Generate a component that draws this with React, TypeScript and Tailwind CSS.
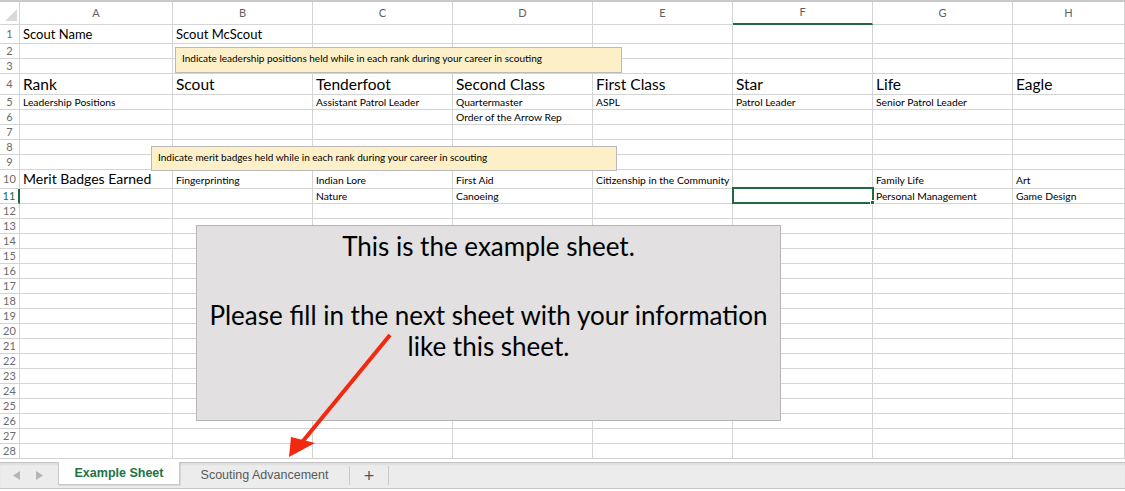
import React from "react";

type Row = {
  h: string;
  size?: string;
  cells: string[];
};

const cols = ["A", "B", "C", "D", "E", "F", "G", "H"];

const rows: Row[] = [
  { h: "h-[19px]", size: "text-[13px]", cells: ["Scout Name", "Scout McScout"] },
  { h: "h-[15px]", cells: [] },
  { h: "h-[15px]", cells: [] },
  {
    h: "h-[21px]",
    size: "text-[15.5px]",
    cells: ["Rank", "Scout", "Tenderfoot", "Second Class", "First Class", "Star", "Life", "Eagle"],
  },
  {
    h: "h-[15px]",
    size: "text-[10.3px] pb-px",
    cells: [
      "Leadership Positions",
      "",
      "Assistant Patrol Leader",
      "Quartermaster",
      "ASPL",
      "Patrol Leader",
      "Senior Patrol Leader",
      "",
    ],
  },
  { h: "h-[15px]", size: "text-[10.3px] pb-px", cells: ["", "", "", "Order of the Arrow Rep"] },
  { h: "h-[15px]", cells: [] },
  { h: "h-[15px]", cells: [] },
  { h: "h-[15px]", cells: [] },
  {
    h: "h-[19px]",
    size: "text-[10.3px] pb-[2px]",
    cells: [
      "Merit Badges Earned",
      "Fingerprinting",
      "Indian Lore",
      "First Aid",
      "Citizenship in the Community",
      "",
      "Family Life",
      "Art",
    ],
  },
  {
    h: "h-[15px]",
    size: "text-[10.3px] pb-px",
    cells: ["", "", "Nature", "Canoeing", "", "", "Personal Management", "Game Design"],
  },
];

// rows 12..28 are empty
for (let i = 12; i <= 28; i++) rows.push({ h: "h-[15px]", cells: [] });

function Corner() {
  return (
    <div className="h-full border-r border-b border-[#d4d4d4] bg-white">
      <svg width="20" height="22" viewBox="0 0 20 22">
        <polygon points="5,19 17,19 17,7" fill="#d9d9d9" />
      </svg>
    </div>
  );
}

function Grid() {
  return (
    <div className="grid grid-cols-[20px_153px_140px_140px_140px_140px_140px_140px_1fr] border-t-2 border-[#c9c9c9]">
      <div className="h-[23px]">
        <Corner />
      </div>
      {cols.map((c) => (
        <div
          key={c}
          className={
            c === "F"
              ? "h-[23px] flex items-center justify-center border-r border-[#d4d4d4] border-b-2 border-b-[#1f6b41] text-[11px] text-[#5f5f5f]"
              : "h-[23px] flex items-center justify-center border-r border-b border-[#d4d4d4] text-[11px] text-[#5f5f5f]"
          }
        >
          {c}
        </div>
      ))}
      {rows.map((r, i) => (
        <React.Fragment key={i}>
          <div
            className={
              i === 10
                ? `${r.h} flex items-center justify-center border-b border-[#d4d4d4] border-r-2 border-r-[#1f6b41] text-[11px] text-[#1f6b41]`
                : `${r.h} flex items-center justify-center border-r border-b border-[#d4d4d4] text-[11px] text-[#6b6b6b]`
            }
          >
            {i + 1}
          </div>
          {cols.map((c, j) => (
            <div
              key={c}
              className={`${r.h} flex items-end overflow-visible whitespace-nowrap border-r border-b border-[#d4d4d4] pl-[3px] ${
                i === 9 && j === 0 ? "text-[14px]" : r.size ?? "text-[10px]"
              } leading-[1.2] text-black`}
            >
              {r.cells[j] ?? ""}
            </div>
          ))}
        </React.Fragment>
      ))}
    </div>
  );
}

function TabBar() {
  return (
    <div className="mt-[3px] flex h-[27px] items-stretch border-t border-b border-[#c4c4c4] bg-[#ececec] shadow-[inset_0_2px_2px_rgba(0,0,0,0.06)] font-['Liberation_Sans',Arial,sans-serif]">
      <div className="flex w-[58px] items-center gap-[16px] pl-[13px]">
        <svg width="7" height="9" viewBox="0 0 7 9">
          <polygon points="7,0 7,9 0,4.5" fill="#b5b5b5" />
        </svg>
        <svg width="7" height="9" viewBox="0 0 7 9">
          <polygon points="0,0 0,9 7,4.5" fill="#b5b5b5" />
        </svg>
      </div>
      <div className="-mt-px mb-[3px] flex w-[122px] items-center justify-center border-x border-b border-[#c9c9c9] bg-white text-[12.5px] font-bold text-[#217346] shadow-[1px_1px_1px_rgba(0,0,0,0.08)]">
        Example Sheet
      </div>
      <div className="flex w-[169px] items-center justify-center text-[12.5px] text-[#595959]">
        Scouting Advancement
      </div>
      <div className="my-[3px] w-px bg-[#c9c9c9]" />
      <div className="flex w-[38px] items-center justify-center text-[18px] leading-none text-[#555]">
        +
      </div>
      <div className="my-[3px] w-px bg-[#c9c9c9]" />
    </div>
  );
}

export default function App() {
  return (
    <div className="relative h-[491px] w-[1125px] overflow-hidden bg-white font-['Lato','Open_Sans',sans-serif]">
      <Grid />
      <TabBar />

      {/* comment boxes */}
      <div className="absolute left-[175px] top-[47px] flex h-[26px] w-[447px] items-center border border-[#b9b9b9] bg-[#fdf0c8] pb-[3px] pl-[6px] text-[10px] text-black">
        Indicate leadership positions held while in each rank during your career in scouting
      </div>
      <div className="absolute left-[151px] top-[146px] flex h-[25px] w-[466px] items-center border border-[#b9b9b9] bg-[#fdf0c8] pb-[3px] pl-[6px] text-[10px] text-black">
        Indicate merit badges held while in each rank during your career in scouting
      </div>

      {/* selected cell F11 */}
      <div className="absolute left-[732px] top-[187px] h-[17px] w-[142px] border-2 border-[#1f6b41]" />
      <div className="absolute left-[870px] top-[200px] h-[5px] w-[5px] border border-white bg-[#1f6b41]" />

      {/* text box */}
      <div className="absolute left-[196px] top-[225px] h-[196px] w-[585px] border border-[#b5b5b5] bg-[#e2e0e1] pt-[5px] text-center text-[26px] leading-[31px] text-black">
        <p>This is the example sheet.</p>
        <p className="mt-[38px]">Please fill in the next sheet with your information</p>
        <p>like this sheet.</p>
      </div>

      {/* arrow */}
      <svg className="absolute left-0 top-0" width="1125" height="491" viewBox="0 0 1125 491">
        <line x1="390" y1="335" x2="303" y2="441" stroke="#f2290f" strokeWidth="4" />
        <polygon points="289,457 291,437 315,443" fill="#f2290f" />
      </svg>
    </div>
  );
}
